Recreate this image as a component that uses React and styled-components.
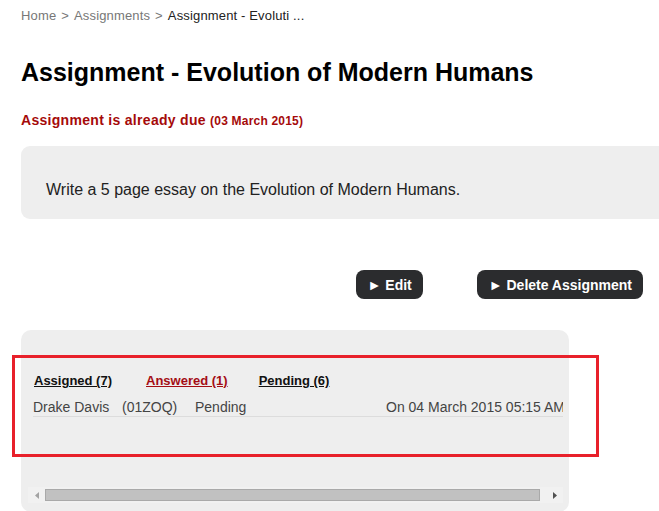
import React from "react";
import styled, { createGlobalStyle } from "styled-components";

const GlobalStyle = createGlobalStyle`
  html, body {
    margin: 0;
    padding: 0;
    background: #fff;
    overflow: hidden;
    font-family: "Liberation Sans", Arial, sans-serif;
  }
`;

const Page = styled.div`
  padding: 8px 0 0 21px;
`;

const Breadcrumb = styled.div`
  font-size: 13px;
  line-height: 16px;
  letter-spacing: 0.15px;
  color: #777;

  > span {
    margin: 0 5px;
  }

  > b {
    font-weight: normal;
    color: #222;
  }
`;

const Title = styled.h1`
  margin: 34px 0 0;
  font-size: 25px;
  line-height: 28px;
  font-weight: bold;
  color: #000;
`;

const Due = styled.div`
  margin-top: 26px;
  font-size: 14px;
  line-height: 17px;
  font-weight: bold;
  letter-spacing: 0.3px;
  color: #a50a0a;

  > small {
    font-size: 12px;
    letter-spacing: 0.2px;
  }
`;

const Description = styled.div`
  margin-top: 16px;
  width: calc(100% + 20px);
  box-sizing: border-box;
  padding: 35px 25px 20px;
  background: #eeeeee;
  border-radius: 9px;
  font-size: 16px;
  line-height: 18px;
  color: #222;
`;

const Actions = styled.div`
  display: flex;
  justify-content: flex-end;
  gap: 54px;
  margin-top: 51px;
  padding-right: 16px;
`;

const Button = styled.button`
  height: 29px;
  padding: 0 11px 0 12px;
  border: none;
  border-radius: 8px;
  background: #2b2c2e;
  color: #fff;
  font-family: "Liberation Sans", Arial, sans-serif;
  font-size: 14px;
  font-weight: bold;
  cursor: pointer;
`;

const Panel = styled.div`
  position: relative;
  width: 548px;
  margin-top: 31px;
  padding: 43px 6px 9px 7px;
  box-sizing: border-box;
  background: #eeeeee;
  border-radius: 10px;
`;

const Highlight = styled.div`
  position: absolute;
  left: -9px;
  top: 25px;
  width: 587px;
  height: 102px;
  box-sizing: border-box;
  border: 3px solid #e8202a;
  pointer-events: none;
`;

const Scroller = styled.div`
  overflow: hidden;
  padding-left: 5px;
`;

const Tabs = styled.div`
  display: flex;
  padding-left: 1px;
  font-size: 13px;
  line-height: 15px;
  font-weight: bold;
`;

const Tab = styled.a`
  margin-right: ${({ gap }) => gap}px;
  color: ${({ active }) => (active ? "#a40d14" : "#111")};
  text-decoration: underline;
`;

const Row = styled.div`
  display: grid;
  grid-template-columns: 89px 73px 191px 300px;
  width: 640px;
  margin-top: 11px;
  font-size: 14px;
  line-height: 17px;
  color: #444;
  white-space: nowrap;
  border-bottom: 1px solid #dcdcdc;
`;

const Scrollbar = styled.div`
  display: flex;
  align-items: center;
  height: 16px;
  margin-top: 70px;
  background: #f1f1f1;
`;

const Arrow = styled.div`
  width: 17px;
  display: flex;
  justify-content: center;
  align-items: center;
`;

const Thumb = styled.div`
  flex: 1;
  height: 12px;
  margin-right: 6px;
  box-sizing: border-box;
  background: #c1c1c1;
  border: 1px solid #a9a9a9;
`;

const rows = [
  { name: "Drake Davis", id: "(01ZOQ)", status: "Pending", date: "On 04 March 2015 05:15 AM" },
];

const App = () => (
  <Page>
    <GlobalStyle />
    <Breadcrumb>
      Home<span>&gt;</span>Assignments<span>&gt;</span>
      <b>Assignment - Evoluti ...</b>
    </Breadcrumb>
    <Title>Assignment - Evolution of Modern Humans</Title>
    <Due>
      Assignment is already due <small>(03 March 2015)</small>
    </Due>
    <Description>Write a 5 page essay on the Evolution of Modern Humans.</Description>
    <Actions>
      <Button>► Edit</Button>
      <Button>► Delete Assignment</Button>
    </Actions>
    <Panel>
      <Scroller>
        <Tabs>
          <Tab gap={34}>Assigned (7)</Tab>
          <Tab gap={31} active>
            Answered (1)
          </Tab>
          <Tab gap={0}>Pending (6)</Tab>
        </Tabs>
        {rows.map((r) => (
          <Row key={r.id}>
            <span>{r.name}</span>
            <span>{r.id}</span>
            <span>{r.status}</span>
            <span>{r.date}</span>
          </Row>
        ))}
      </Scroller>
      <Scrollbar>
        <Arrow>
          <svg width="4" height="7" viewBox="0 0 4 7">
            <path d="M4 0 L0 3.5 L4 7 Z" fill="#a3a3a3" />
          </svg>
        </Arrow>
        <Thumb />
        <Arrow>
          <svg width="4" height="7" viewBox="0 0 4 7">
            <path d="M0 0 L4 3.5 L0 7 Z" fill="#505050" />
          </svg>
        </Arrow>
      </Scrollbar>
      <Highlight />
    </Panel>
  </Page>
);

export default App;
